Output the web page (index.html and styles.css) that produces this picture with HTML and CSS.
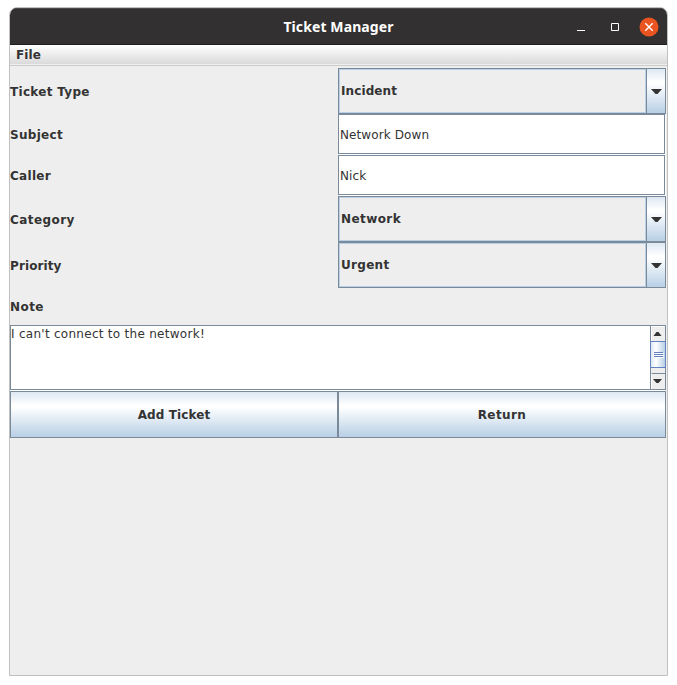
FILE: index.html
```
<!DOCTYPE html>
<html lang="en">
<head>
<meta charset="utf-8">
<title>Ticket Manager</title>
<link rel="stylesheet" href="styles.css">
</head>
<body>
<div class="window">
  <header class="titlebar">
    <h1 class="title">Ticket Manager</h1>
    <div class="controls">
      <svg width="10" height="10" viewBox="0 0 10 10"><path d="M1 8.5h8" stroke="#fff"/></svg>
      <svg width="10" height="10" viewBox="0 0 10 10"><path d="M1.5 1.5h7v7h-7z" fill="none" stroke="#fff"/></svg>
      <svg width="20" height="20" viewBox="0 0 20 20"><circle cx="10" cy="10" r="9.5" fill="#e95420"/><path d="M6.3 6.3l7.4 7.4M13.7 6.3l-7.4 7.4" stroke="#fff" stroke-width="1.4"/></svg>
    </div>
  </header>
  <nav class="menubar"><span class="text snug">File</span></nav>
  <main class="form">
    <div class="row tall">
      <label><span class="text">Ticket Type</span></label>
      <div class="combo"><div class="value"><span class="text snug">Incident</span></div><div class="arrow"><svg width="11" height="5" viewBox="0 0 11 5"><path d="M0 0h11L6.500 5h-2z" fill="#333"/></svg></div></div>
    </div>
    <div class="row">
      <label><span class="text">Subject</span></label>
      <div class="field"><span class="plain">Network Down</span></div>
    </div>
    <div class="row">
      <label><span class="text">Caller</span></label>
      <div class="field"><span class="plain">Nick</span></div>
    </div>
    <div class="row tall">
      <label><span class="text wide">Category</span></label>
      <div class="combo"><div class="value"><span class="text wide">Network</span></div><div class="arrow"><svg width="11" height="5" viewBox="0 0 11 5"><path d="M0 0h11L6.500 5h-2z" fill="#333"/></svg></div></div>
    </div>
    <div class="row tall">
      <label><span class="text snug">Priority</span></label>
      <div class="combo"><div class="value"><span class="text">Urgent</span></div><div class="arrow"><svg width="11" height="5" viewBox="0 0 11 5"><path d="M0 0h11L6.500 5h-2z" fill="#333"/></svg></div></div>
    </div>
    <div class="note-label"><span class="text wide">Note</span></div>
    <div class="note">
      <div class="note-text"><span class="plain loose">I can't connect to the network!</span></div>
      <div class="scrollbar">
        <div class="step"><svg width="9" height="4" viewBox="0 0 9 4"><path d="M0.500 4h8L5.500 0h-2z" fill="#333"/></svg></div>
        <div class="thumb"><i></i><i></i><i></i></div>
        <div class="track"></div>
        <div class="step down"><svg width="9" height="4" viewBox="0 0 9 4"><path d="M0 0h9L5.500 4h-2z" fill="#333"/></svg></div>
      </div>
    </div>
    <div class="buttons">
      <button><span class="text snug">Add Ticket</span></button>
      <button><span class="text wide">Return</span></button>
    </div>
  </main>
</div>
</body>
</html>
```
FILE: styles.css
```
* { box-sizing: border-box; }
body { margin: 0; background: #fff; color: #333; font-family: "DejaVu Sans", sans-serif; font-size: 12px; line-height: 16px; }
svg { display: block; }
.window { width: 659px; height: 669px; margin: 7px 0 0 9px; border: 1px solid #c0c0c0; border-radius: 8px 8px 0 0; background: #eee; overflow: hidden; }
.titlebar { display: grid; grid-template-columns: 1fr auto 1fr; align-items: center; height: 37px; background: #333031; border-top: 1px solid #4b494a; border-bottom: 1px solid #1f1e1e; }
.title { grid-column: 2; margin: 0; color: #fff; font: bold 14px/20px "Noto Sans", sans-serif; letter-spacing: 0.1px; }
.controls { display: flex; justify-content: flex-end; align-items: center; gap: 24px; padding-right: 8px; }
.controls svg:last-child { margin-left: -5px; }
.menubar { height: 21px; padding: 2px 0 0 6px; background: linear-gradient(#fff, #dadada 19px, #eee 19px, #eee 20px, #ccc 20px); }
.text { font-weight: bold; font-size: 12px; letter-spacing: 0.3px; white-space: pre; }
.text.wide { letter-spacing: 0.42px; }
.text.snug { letter-spacing: 0.1px; }
.plain { font-size: 12px; letter-spacing: 0.1px; white-space: pre; }
.plain.loose { letter-spacing: 0.28px; }
.form { width: 656px; padding-top: 2px; }
.row { display: grid; grid-template-columns: 1fr 1fr; height: 41px; }
.row.tall { height: 46px; }
label, .note-label { display: flex; align-items: center; }
.tall label { padding-top: 2px; }
.combo { display: flex; border: 1px solid #7a8a99; }
.value { flex: 1; display: flex; align-items: center; padding-left: 1px; border: 1px solid #b8cfe5; }
.arrow { flex: 0 0 19px; border-left: 1px solid #7a8a99; display: flex; align-items: center; padding: 1px 0 0 4px; }
.arrow, .buttons button { background: linear-gradient(#dde8f3, #fff 30%, #fff 33%, #b8cfe5); }
.field { margin-right: 1px; margin-bottom: 1px; border: 1px solid #7a8a99; background: #fff; box-shadow: 1px 1px #fff; display: flex; align-items: center; padding: 1px 0 0 1px; }
.note-label { height: 37px; }
.note { display: flex; width: 656px; height: 65px; border: 1px solid #7a8a99; background: #fff; box-shadow: 0 1px #fff; }
.note-text { flex: 1; }
.scrollbar { width: 15px; border-left: 1px solid #7a8a99; background: #eee; display: flex; flex-direction: column; }
.step { height: 15px; border-left: 1px solid #fff; border-top: 1px solid #fff; display: flex; align-items: center; padding-left: 1px; }
.thumb { height: 27px; margin: 0 -1px; border: 1px solid #6382bf; background: linear-gradient(90deg, #dde8f3, #fff 35%, #b8cfe5); display: flex; flex-direction: column; align-items: center; justify-content: center; gap: 1px; }
.thumb i { width: 9px; height: 1px; background: #6382bf; box-shadow: 1px 1px #fff; }
.track { flex: 1; }
.step.down { height: 16px; padding-bottom: 1px; border-top-color: #7a8a99; }
.buttons { display: grid; grid-template-columns: 1fr 1fr; height: 47px; margin-top: 1px; }
.buttons button { border: 1px solid #7a8a99; border-radius: 0; padding: 0; color: #333; font-family: inherit; font-size: 12px; }
```
